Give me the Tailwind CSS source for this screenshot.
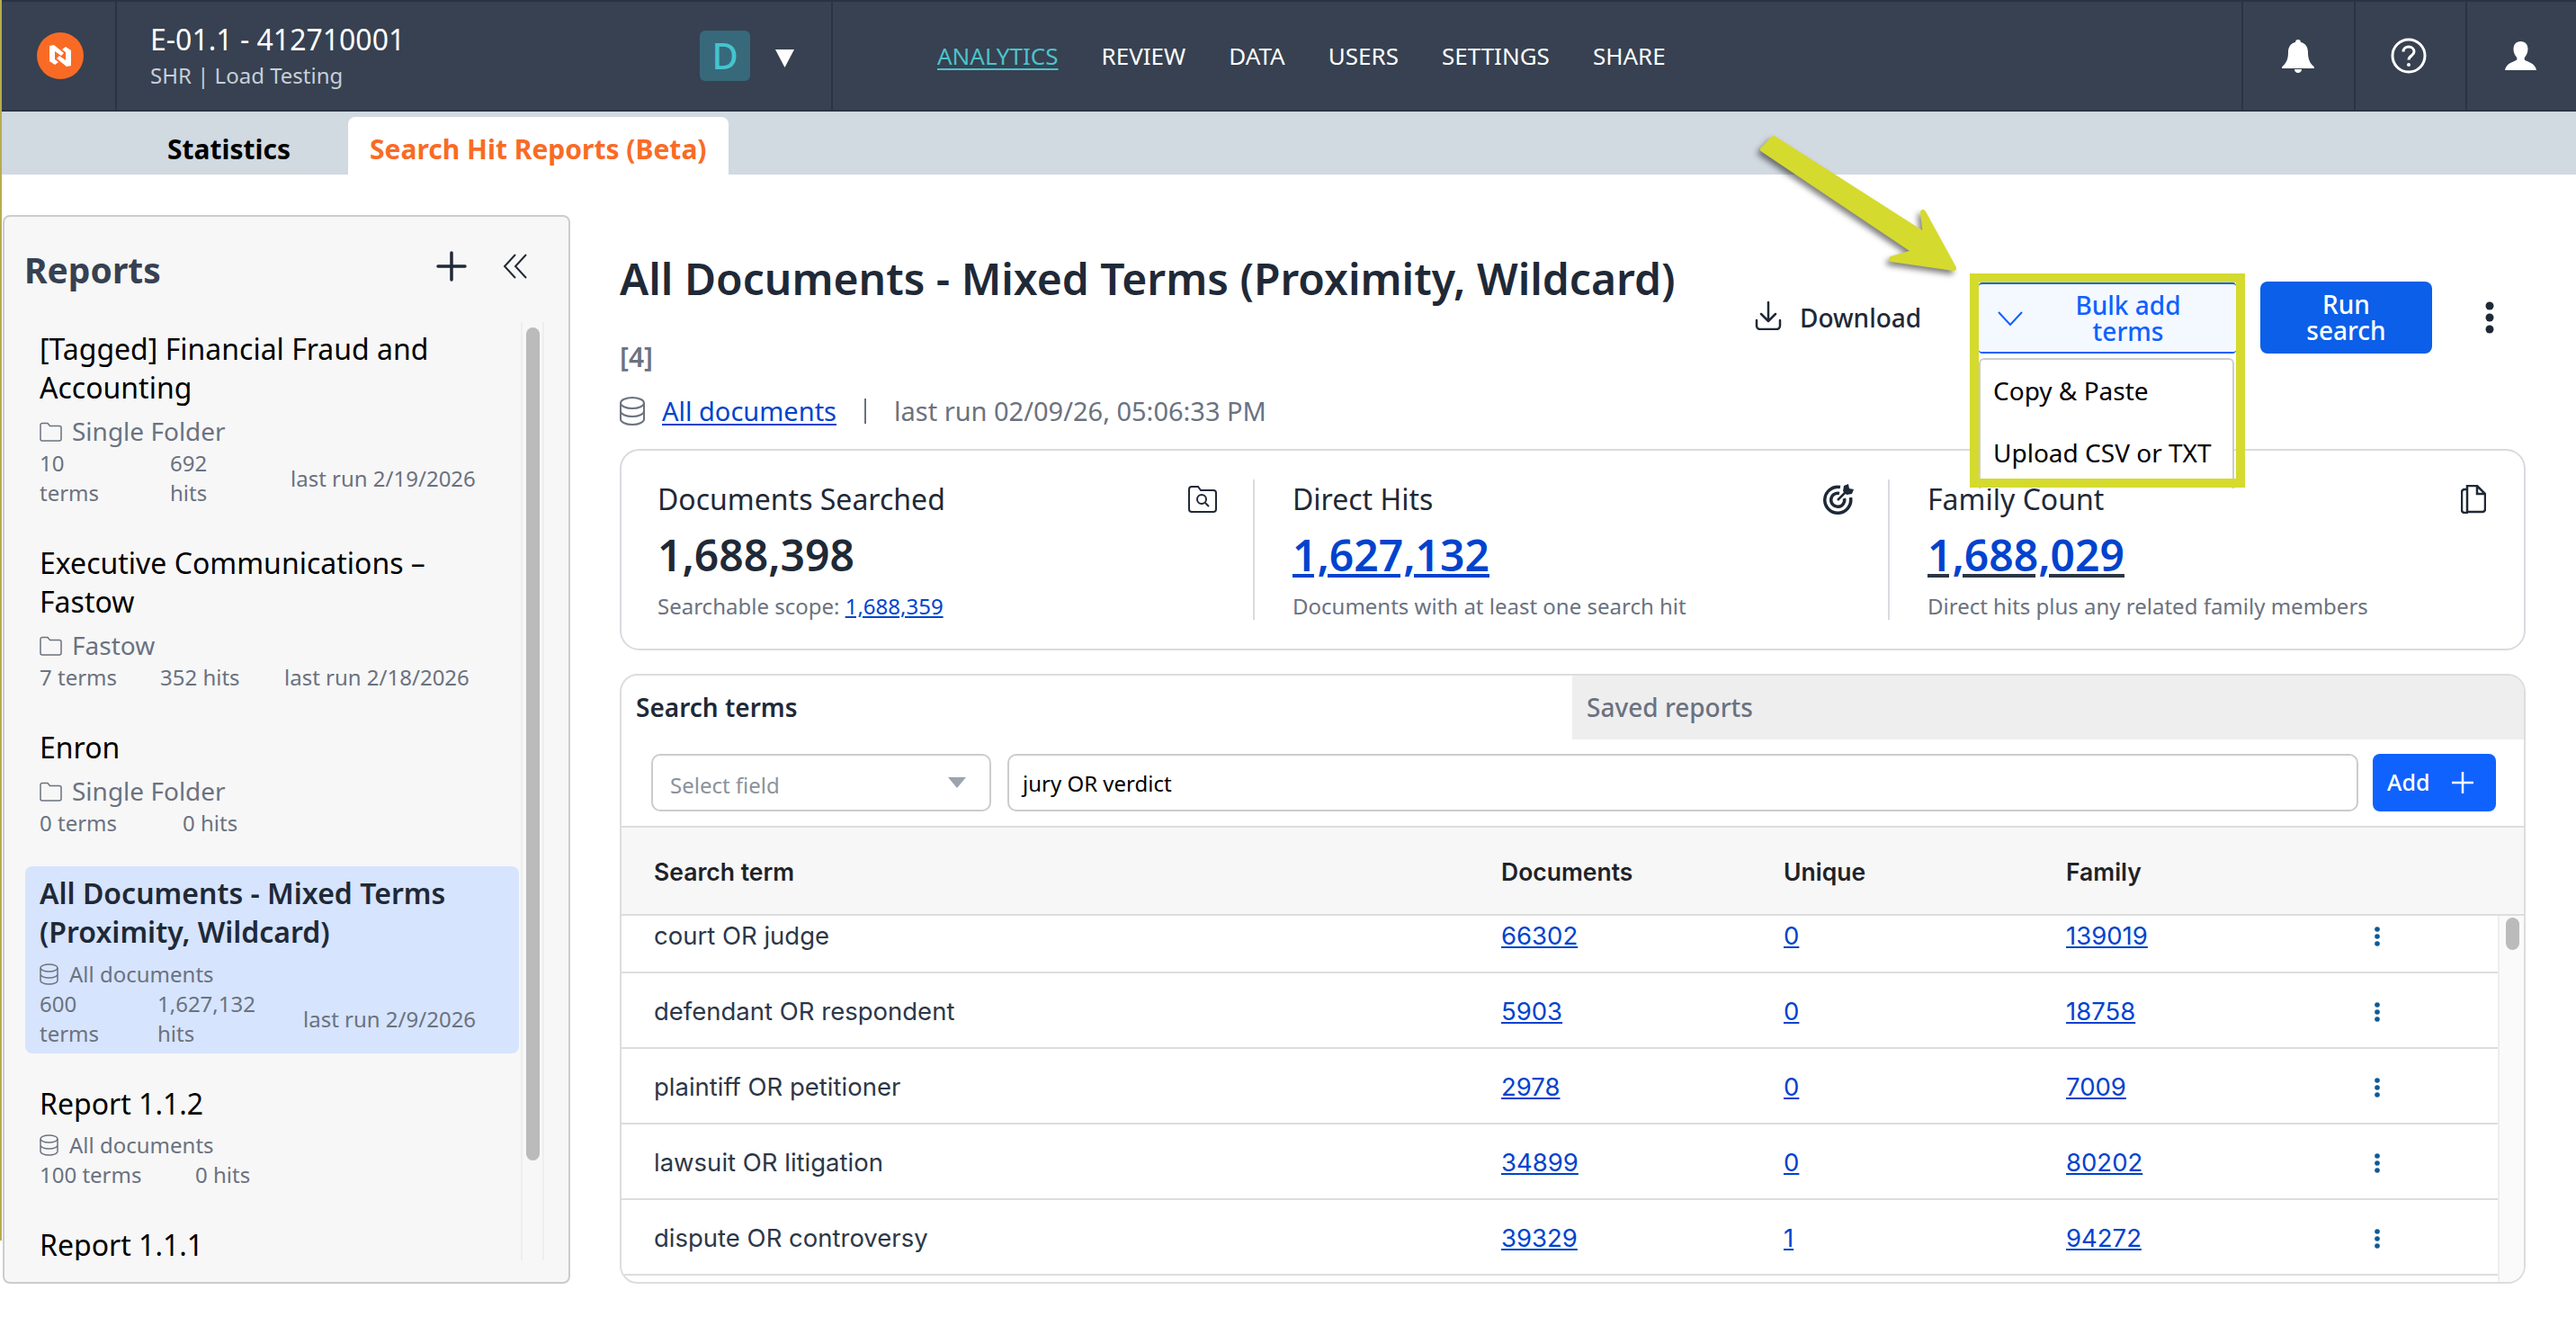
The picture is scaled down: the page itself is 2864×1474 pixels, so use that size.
<!DOCTYPE html>
<html lang="en">
<head>
  <meta charset="UTF-8">
  <title>Search Hit Reports</title>
  <script src="https://cdn.jsdelivr.net/npm/@tailwindcss/browser@4"></script>
</head>
<body class="bg-white font-['Noto_Sans',sans-serif] overflow-hidden">
<div class="relative w-[2864px] h-[1474px] overflow-hidden">
  <div class="absolute left-0 top-0 w-[2px] h-[1379px] bg-[#b9ab4e] z-20"></div>

  <!-- top bar -->
  <header class="flex h-[124px] bg-[#374151] border-y-2 border-[#2a3343] text-white">
    <div class="w-[130px] flex items-center justify-center pl-[6px] border-r-2 border-[#2a3343]">
      <div class="w-[52px] h-[52px] rounded-full bg-[#f96b25] flex items-center justify-center">
        <svg width="24" height="24" viewBox="0 0 24 24" fill="#fff"><path d="M0 1l5-1 11 9-3 3-7-5v9l4 3-4 3-6-4z"/><path d="M0 1l5-1 11 9-3 3-7-5v9l4 3-4 3-6-4z" transform="rotate(180 12 12)"/></svg>
      </div>
    </div>
    <div class="w-[796px] flex items-center pl-[37px] border-r-2 border-[#2a3343]">
      <div class="w-[611px]">
        <div class="text-[32px] leading-[42px]">E-01.1 - 412710001</div>
        <div class="text-[24px] leading-[34px] mt-[2px] text-[#c9ced6]">SHR | Load Testing</div>
      </div>
      <div class="w-[56px] h-[56px] rounded-[6px] bg-[#37697a] text-[#45c4cf] text-[40px] font-medium flex items-center justify-center">D</div>
      <svg class="ml-[28px] mt-[6px]" width="21" height="20" viewBox="0 0 21 20"><path d="M0 0h21L10.500 20z" fill="#fff"/></svg>
    </div>
    <nav class="flex-1 flex items-center gap-[48px] pl-[116px] text-[26px]">
      <a class="text-[#4cc3cc] underline decoration-2 underline-offset-4">ANALYTICS</a>
      <a>REVIEW</a>
      <a>DATA</a>
      <a>USERS</a>
      <a>SETTINGS</a>
      <a>SHARE</a>
    </nav>
    <div class="w-[125px] flex items-center justify-center pr-[2px] border-l-2 border-[#2a3343]">
      <svg width="36" height="37" viewBox="0 0 36 37" fill="#fff"><path d="M18 0c1.800 0 3 1.200 3 3 5.500 1.300 8 5.500 8 11 0 8 2 12 7 16.500V32H0v-1.500C5 26 7 22 7 14c0-5.500 2.500-9.700 8-11 0-1.800 1.200-3 3-3z"/><path d="M14 33h8c0 2.500-1.800 4-4 4s-4-1.500-4-4z"/></svg>
    </div>
    <div class="w-[124px] flex items-center justify-center pr-[4px] border-l-2 border-[#2a3343]">
      <svg width="40" height="40" viewBox="0 0 40 40" fill="none" stroke="#fff" stroke-width="3"><circle cx="20" cy="20" r="18"/><path d="M14 15.500c0-3.500 2.700-5.500 6-5.500s6 2.200 6 5.500c0 4.500-6 4.500-6 9"/><circle cx="20" cy="30" r="2" fill="#fff" stroke="none"/></svg>
    </div>
    <div class="w-[123px] flex items-center justify-center pr-[2px] border-l-2 border-[#2a3343]">
      <svg width="35" height="32" viewBox="0 0 35 32" fill="#fff"><path d="M17.500 0c5 0 8 3.500 8 8.500 0 4-1.800 7.500-3.800 9.500v2.500c4 2.500 11.800 3.500 13.300 11.500H0c1.500-8 9.300-9 13.300-11.500V18c-2-2-3.800-5.500-3.800-9.500C9.500 3.500 12.500 0 17.500 0z"/></svg>
    </div>
  </header>

  <!-- sub tabs -->
  <div class="flex items-end h-[70px] bg-[#d1d9e1] pl-[186px]">
    <div class="w-[201px] h-[64px] pt-[6px] flex items-center text-[30px] font-bold text-black">Statistics</div>
    <div class="w-[423px] h-[64px] pl-[24px] pt-[6px] flex items-center bg-white rounded-t-[8px] text-[30px] font-bold text-[#f96b25]">Search Hit Reports (Beta)</div>
  </div>

  <div class="flex pt-[45px]">
    <!-- reports sidebar -->
    <aside class="ml-[3px] w-[631px] h-[1188px] bg-[#f7f7f7] border-2 border-[#cccccc] rounded-[8px] pl-[23px] shrink-0">
      <div class="flex items-center h-[117px]">
        <h2 class="flex-1 -ml-[1px] pt-[2px] text-[39px] font-bold text-[#374151]">Reports</h2>
        <svg width="34" height="34" viewBox="0 0 34 34" class="mr-[40px] mb-[8px]" fill="none" stroke="#1f2937" stroke-width="3.500" stroke-linecap="round"><path d="M17 2v30M2 17h30"/></svg>
        <svg width="28" height="28" viewBox="0 0 28 28" class="mr-[45px] mb-[8px]" fill="none" stroke="#1f2937" stroke-width="2"><path d="M14 1L2 14l12 13M26 1L14 14l12 13"/></svg>
      </div>
      <div class="flex h-[1043px] overflow-hidden">
        <div class="w-[549px] flex flex-col gap-[24px] shrink-0">
          <div class="px-4 py-2">
            <div class="text-[32px] leading-[43px] text-black">[Tagged] Financial Fraud and Accounting</div>
            <div class="mt-[8px] h-[38px] flex items-center text-[28px] text-[#6b7280]">
              <svg width="25" height="22" viewBox="0 0 25 22" class="mr-[11px] mt-[2px]" fill="none" stroke="#6b7280" stroke-width="1.500"><path d="M1 3.500a2 2 0 0 1 2-2h6l2.500 3H22a2 2 0 0 1 2 2V19a2 2 0 0 1-2 2H3a2 2 0 0 1-2-2z"/></svg>
              Single Folder
            </div>
            <div class="flex items-center text-[24px] leading-[33px] text-[#6b7280]">
              <span class="w-[145px]">10<br>terms</span><span class="w-[134px]">692<br>hits</span><span>last run 2/19/2026</span>
            </div>
          </div>
          <div class="px-4 py-2">
            <div class="text-[32px] leading-[43px] text-black">Executive Communications – Fastow</div>
            <div class="mt-[8px] h-[38px] flex items-center text-[28px] text-[#6b7280]">
              <svg width="25" height="22" viewBox="0 0 25 22" class="mr-[11px] mt-[2px]" fill="none" stroke="#6b7280" stroke-width="1.500"><path d="M1 3.500a2 2 0 0 1 2-2h6l2.500 3H22a2 2 0 0 1 2 2V19a2 2 0 0 1-2 2H3a2 2 0 0 1-2-2z"/></svg>
              Fastow
            </div>
            <div class="flex items-center text-[24px] leading-[33px] text-[#6b7280]">
              <span class="w-[134px]">7 terms</span><span class="w-[138px]">352 hits</span><span>last run 2/18/2026</span>
            </div>
          </div>
          <div class="px-4 py-2">
            <div class="text-[32px] leading-[43px] text-black">Enron</div>
            <div class="mt-[8px] h-[38px] flex items-center text-[28px] text-[#6b7280]">
              <svg width="25" height="22" viewBox="0 0 25 22" class="mr-[11px] mt-[2px]" fill="none" stroke="#6b7280" stroke-width="1.500"><path d="M1 3.500a2 2 0 0 1 2-2h6l2.500 3H22a2 2 0 0 1 2 2V19a2 2 0 0 1-2 2H3a2 2 0 0 1-2-2z"/></svg>
              Single Folder
            </div>
            <div class="flex items-center text-[24px] leading-[33px] text-[#6b7280]">
              <span class="w-[159px]">0 terms</span><span>0 hits</span>
            </div>
          </div>
          <div class="px-4 pt-2 pb-[6px] bg-[#d6e4fd] rounded-[8px]">
            <div class="text-[32px] leading-[43px] font-semibold text-[#1f2937]">All Documents - Mixed Terms (Proximity, Wildcard)</div>
            <div class="mt-[10px] h-[32px] flex items-center text-[24px] text-[#6b7280]">
              <svg width="21" height="24" viewBox="0 0 21 24" class="mr-[12px]" fill="none" stroke="#6b7280" stroke-width="1.500"><ellipse cx="10.500" cy="5" rx="9.500" ry="4"/><path d="M1 5v14c0 2.200 4.300 4 9.500 4s9.500-1.800 9.500-4V5M1 12c0 2.200 4.300 4 9.500 4s9.500-1.800 9.500-4"/></svg>
              All documents
            </div>
            <div class="flex items-center text-[24px] leading-[33px] text-[#6b7280]">
              <span class="w-[131px]">600<br>terms</span><span class="w-[162px]">1,627,132<br>hits</span><span>last run 2/9/2026</span>
            </div>
          </div>
          <div class="px-4 pt-[10px] pb-2">
            <div class="text-[32px] leading-[43px] text-black">Report 1.1.2</div>
            <div class="mt-[9px] h-[32px] flex items-center text-[24px] text-[#6b7280]">
              <svg width="21" height="24" viewBox="0 0 21 24" class="mr-[12px]" fill="none" stroke="#6b7280" stroke-width="1.500"><ellipse cx="10.500" cy="5" rx="9.500" ry="4"/><path d="M1 5v14c0 2.200 4.300 4 9.500 4s9.500-1.800 9.500-4V5M1 12c0 2.200 4.300 4 9.500 4s9.500-1.800 9.500-4"/></svg>
              All documents
            </div>
            <div class="flex items-center text-[24px] leading-[33px] text-[#6b7280]">
              <span class="w-[173px]">100 terms</span><span>0 hits</span>
            </div>
          </div>
          <div class="px-4 py-2">
            <div class="text-[32px] leading-[43px] text-black">Report 1.1.1</div>
          </div>
        </div>
        <div class="ml-[2px] w-[26px] h-full border-x-2 border-[#eeeeee] pt-[6px] pl-[4px]">
          <div class="w-[15px] h-[926px] rounded-full bg-[#bbbbbb]"></div>
        </div>
      </div>
    </aside>

    <!-- main -->
    <main class="ml-[55px] w-[2119px] shrink-0">
      <div class="flex h-[260px]">
        <div class="flex-1 pt-[36px]">
          <h1 class="text-[48px] leading-[70px] font-semibold text-[#1f2937]">All Documents - Mixed Terms (Proximity, Wildcard)</h1>
          <div class="mt-[31px] h-[40px] flex items-center text-[30px] font-semibold text-[#6b7280]">[4]</div>
          <div class="mt-[21px] h-[40px] flex items-center text-[29px] text-[#6b7280]">
            <svg width="28" height="32" viewBox="0 0 28 32" fill="none" stroke="#6b7280" stroke-width="2" class="mr-[19px]"><ellipse cx="14" cy="7" rx="13" ry="6"/><path d="M1 7v18c0 3.300 5.800 6 13 6s13-2.700 13-6V7M1 16c0 3.300 5.800 6 13 6s13-2.700 13-6"/></svg>
            <a class="text-[#0043ce] underline underline-offset-3">All documents</a>
            <span class="mx-[31px] w-[2px] h-[28px] bg-[#6b7280]"></span>
            <span>last run 02/09/26, 05:06:33 PM</span>
          </div>
        </div>
        <div class="flex items-start pt-[74px] pr-[35px] z-10">
          <div class="flex items-center h-[80px] w-[249px] text-[28px] font-medium text-[#1f2937]">
            <svg width="30" height="32" viewBox="0 0 30 32" fill="none" stroke="#1f2937" stroke-width="2.500" stroke-linecap="round" stroke-linejoin="round" class="mr-[20px] mb-[4px]"><path d="M15 1v20M7 14l8 8 8-8M2 21v6a4 4 0 0 0 4 4h18a4 4 0 0 0 4-4v-6"/></svg>
            Download
          </div>
          <div class="relative mt-[1px] w-[286px] h-[79px]">
            <button class="w-full h-full flex items-center border-y-2 border-[#0f62fe] rounded-[4px] bg-[#f4f8ff] text-[#0f62fe] text-[28px] leading-[29px] font-medium">
              <svg width="28" height="16" viewBox="0 0 28 16" fill="none" stroke="#0f62fe" stroke-width="2" class="ml-[21px] shrink-0"><path d="M1 1l13 14L27 1"/></svg>
              <span class="w-[180px] ml-[27px] text-center">Bulk add<br>terms</span>
            </button>
            <div class="absolute left-0 top-[84px] w-[284px] h-[145px] bg-white border-2 border-b-0 border-[#cccccc] rounded-t-[6px] text-[28px] text-black pl-[14px]">
              <div class="pt-[13px] h-[69px]">Copy &amp; Paste</div>
              <div class="pt-[13px]">Upload CSV or TXT</div>
            </div>
            <div class="absolute -left-[10px] -top-[10px] w-[306px] h-[238px] border-[10px] border-[#d5da2e]"></div>
          </div>
          <button class="ml-[27px] w-[191px] h-[80px] rounded-[8px] bg-[#0b5fe8] text-white text-[28px] leading-[29px] font-medium">Run<br>search</button>
          <svg width="10" height="36" viewBox="0 0 10 36" fill="#1f2937" class="ml-[59px] mt-[22px]"><circle cx="5" cy="5" r="4.500"/><circle cx="5" cy="18" r="4.500"/><circle cx="5" cy="31" r="4.500"/></svg>
        </div>
      </div>

      <!-- stat cards -->
      <section class="h-[224px] border-2 border-[#d8dbdf] rounded-[22px] flex items-center">
        <div class="w-[704px] h-[156px] border-r-2 border-[#d8dbdf] pl-[40px] pr-[40px] flex flex-col">
          <div class="flex justify-between items-center h-[44px]"><span class="text-[32px] text-[#1f2937]">Documents Searched</span>
            <svg width="32" height="30" viewBox="0 0 32 30" fill="none" stroke="#1f2937" stroke-width="2"><path d="M1 4a3 3 0 0 1 3-3h7l3 4h14a3 3 0 0 1 3 3v18a3 3 0 0 1-3 3H4a3 3 0 0 1-3-3z"/><circle cx="15" cy="15" r="5"/><path d="M19 19l4 4"/></svg></div>
          <div class="mt-[8px] h-[64px] flex items-center text-[48px] font-semibold text-[#1f2937]">1,688,398</div>
          <div class="mt-[7px] text-[24px] text-[#6b7280]">Searchable scope: <a class="text-[#0043ce] underline">1,688,359</a></div>
        </div>
        <div class="w-[706px] h-[156px] border-r-2 border-[#d8dbdf] pl-[42px] pr-[38px] flex flex-col">
          <div class="flex justify-between items-center h-[44px]"><span class="text-[32px] text-[#1f2937]">Direct Hits</span>
            <svg width="34" height="34" viewBox="0 0 34 34" fill="none" stroke="#1f2937" stroke-width="3.500"><path d="M19 3.500A14.500 14.500 0 1 0 30.500 15"/><path d="M18 10.500A7.500 7.500 0 1 0 23.500 16"/><path d="M16 18L27 7" stroke-width="2.500"/><path d="M23 2l5-2 1 5 5 1-2 5-6 1-4-4z" fill="#1f2937" stroke="none"/></svg></div>
          <div class="mt-[8px] h-[64px] flex items-center text-[48px] font-semibold text-[#0043ce] underline">1,627,132</div>
          <div class="mt-[7px] text-[24px] text-[#6b7280]">Documents with at least one search hit</div>
        </div>
        <div class="flex-1 h-[156px] pl-[42px] pr-[42px] flex flex-col">
          <div class="flex justify-between items-center h-[44px]"><span class="text-[32px] text-[#1f2937]">Family Count</span>
            <svg width="28" height="32" viewBox="0 0 28 32" fill="none" stroke="#1f2937" stroke-width="2.500"><path d="M7 5V1h11l9 9v17a3 3 0 0 1-3 3H7V5zM18 1v9h9"/><path d="M7 5H4a3 3 0 0 0-3 3v20a3 3 0 0 0 3 3h4"/></svg></div>
          <div class="mt-[8px] h-[64px] flex items-center text-[48px] font-semibold text-[#0043ce] underline decoration-[#2b3544]">1,688,029</div>
          <div class="mt-[7px] text-[24px] text-[#6b7280]">Direct hits plus any related family members</div>
        </div>
      </section>

      <!-- search terms panel -->
      <section class="mt-[26px] h-[678px] border-2 border-[#dddddd] rounded-[20px] overflow-hidden flex flex-col">
        <div class="flex h-[71px] shrink-0 text-[28px] font-semibold">
          <div class="w-[1057px] pl-[16px] pb-[2px] flex items-center text-[#1f2937]">Search terms</div>
          <div class="flex-1 pl-[16px] pb-[2px] flex items-center bg-[#eeeeee] text-[#6b7280] font-medium">Saved reports</div>
        </div>
        <div class="flex h-[96px] shrink-0 pt-[16px] pl-[33px] text-[24px]">
          <div class="w-[378px] h-[64px] border-2 border-[#cccccc] rounded-[10px] flex items-center justify-between pl-[19px] pr-[26px] text-[#8b929c]"><span class="pt-[6px]">Select field</span>
            <svg width="20" height="12" viewBox="0 0 20 12" fill="#9ca3af"><path d="M0 0h20L10 12z"/></svg></div>
          <div class="ml-[18px] w-[1502px] h-[64px] border-2 border-[#cccccc] rounded-[10px] flex items-center pl-[15px] pt-[1px] text-black">jury OR verdict</div>
          <button class="ml-[16px] w-[137px] h-[64px] rounded-[8px] bg-[#0f62fe] text-white text-[25px] flex items-center justify-between pl-[16px] pr-[25px] font-medium">Add
            <svg width="24" height="24" viewBox="0 0 24 24" fill="none" stroke="#fff" stroke-width="2.500"><path d="M12 0v24M0 12h24"/></svg></button>
        </div>
        <div class="grid grid-cols-[942px_314px_314px_346px] items-center h-[100px] pt-[3px] shrink-0 pl-[36px] bg-[#f7f7f7] border-y-2 border-[#dddddd] font-['Inter',sans-serif] font-semibold text-[26.500px] text-[#1f2328]">
          <div>Search term</div><div>Documents</div><div>Unique</div><div>Family</div>
        </div>
        <div class="flex flex-1 min-h-0 font-['Inter',sans-serif] text-[27.500px]">
          <div class="w-[2086px] shrink-0 -mt-[20px]">
            <div class="grid grid-cols-[942px_314px_314px_346px_8px] items-center h-[84px] pt-[3px] border-b-2 border-[#dddddd] pl-[36px] text-[#2d3748]"><div>court OR judge</div><a class="text-[#0043ce] underline">66302</a><a class="text-[#0043ce] underline">0</a><a class="text-[#0043ce] underline">139019</a>
              <svg class="-ml-[4px]" width="8" height="22" viewBox="0 0 8 22" fill="#0f5a96"><circle cx="4" cy="3" r="2.800"/><circle cx="4" cy="11" r="2.800"/><circle cx="4" cy="19" r="2.800"/></svg></div>
            <div class="grid grid-cols-[942px_314px_314px_346px_8px] items-center h-[84px] pt-[3px] border-b-2 border-[#dddddd] pl-[36px] text-[#2d3748]"><div>defendant OR respondent</div><a class="text-[#0043ce] underline">5903</a><a class="text-[#0043ce] underline">0</a><a class="text-[#0043ce] underline">18758</a>
              <svg class="-ml-[4px]" width="8" height="22" viewBox="0 0 8 22" fill="#0f5a96"><circle cx="4" cy="3" r="2.800"/><circle cx="4" cy="11" r="2.800"/><circle cx="4" cy="19" r="2.800"/></svg></div>
            <div class="grid grid-cols-[942px_314px_314px_346px_8px] items-center h-[84px] pt-[3px] border-b-2 border-[#dddddd] pl-[36px] text-[#2d3748]"><div>plaintiff OR petitioner</div><a class="text-[#0043ce] underline">2978</a><a class="text-[#0043ce] underline">0</a><a class="text-[#0043ce] underline">7009</a>
              <svg class="-ml-[4px]" width="8" height="22" viewBox="0 0 8 22" fill="#0f5a96"><circle cx="4" cy="3" r="2.800"/><circle cx="4" cy="11" r="2.800"/><circle cx="4" cy="19" r="2.800"/></svg></div>
            <div class="grid grid-cols-[942px_314px_314px_346px_8px] items-center h-[84px] pt-[3px] border-b-2 border-[#dddddd] pl-[36px] text-[#2d3748]"><div>lawsuit OR litigation</div><a class="text-[#0043ce] underline">34899</a><a class="text-[#0043ce] underline">0</a><a class="text-[#0043ce] underline">80202</a>
              <svg class="-ml-[4px]" width="8" height="22" viewBox="0 0 8 22" fill="#0f5a96"><circle cx="4" cy="3" r="2.800"/><circle cx="4" cy="11" r="2.800"/><circle cx="4" cy="19" r="2.800"/></svg></div>
            <div class="grid grid-cols-[942px_314px_314px_346px_8px] items-center h-[84px] pt-[3px] border-b-2 border-[#dddddd] pl-[36px] text-[#2d3748]"><div>dispute OR controversy</div><a class="text-[#0043ce] underline">39329</a><a class="text-[#0043ce] underline">1</a><a class="text-[#0043ce] underline">94272</a>
              <svg class="-ml-[4px]" width="8" height="22" viewBox="0 0 8 22" fill="#0f5a96"><circle cx="4" cy="3" r="2.800"/><circle cx="4" cy="11" r="2.800"/><circle cx="4" cy="19" r="2.800"/></svg></div>
          </div>
          <div class="flex-1 border-l-2 border-[#eeeeee] bg-[#fafafa] pt-[2px] pl-[7px]">
            <div class="w-[15px] h-[36px] rounded-full bg-[#bbbbbb]"></div>
          </div>
        </div>
      </section>
    </main>
  </div>

  <!-- callout arrow -->
  <svg class="absolute left-0 top-0 z-30 pointer-events-none drop-shadow-[-3px_4px_3px_rgba(0,0,0,0.5)]" width="2864" height="400" viewBox="0 0 2864 400">
    <path d="M1972 154L2141 262L2138 236L2172 298L2103 288L2130 280L1960 166z" fill="#d5da2e" stroke="#d5da2e" stroke-width="6" stroke-linejoin="round"/>
  </svg>
</div>
</body>
</html>
